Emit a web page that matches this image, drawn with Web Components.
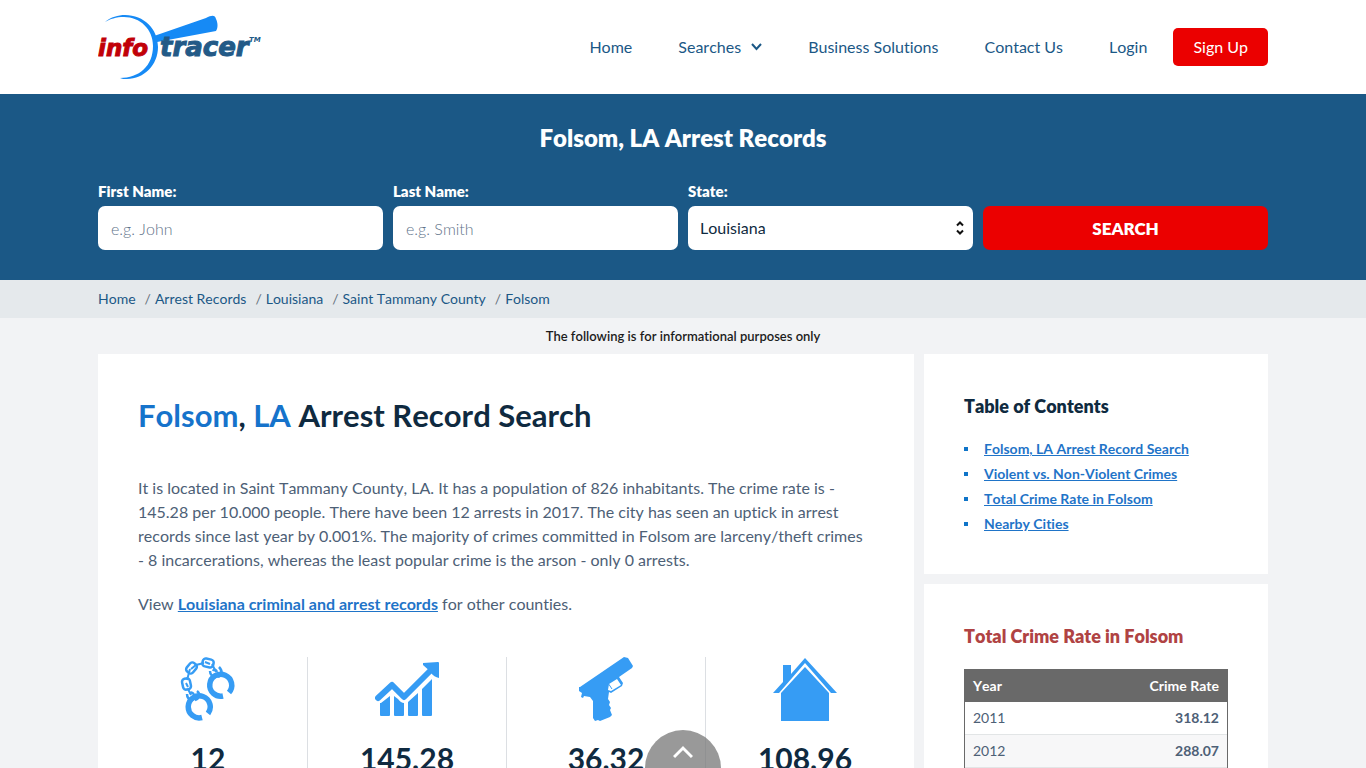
<!DOCTYPE html>
<html lang="en">
<head>
<meta charset="utf-8">
<meta name="viewport" content="width=device-width, initial-scale=1">
<title>Folsom, LA Arrest Records</title>
<style>
    body {
        margin: 0;
        background: #f2f3f5;
        color: #4d6076;
        font: 16px/24px Lato, "Open Sans", sans-serif;
        font-variant-ligatures: none;
        font-kerning: none;
        --navy: #0f2a40;
        --brand: #1b5886;
        --link: #1f74c8;
        --red: #eb0000;
        --icon: #369cf4;
    }
    .columns {
        display: grid;
        grid-template-columns: minmax(0, 1fr) 344px;
        gap: 10px;
        max-width: 1170px;
        margin: 0 auto;
        padding-bottom: 40px;
    }
    .side {
        display: flex;
        flex-direction: column;
        gap: 10px;
    }
    .notice {
        margin: 0;
        padding: 6px 0;
        text-align: center;
        font-size: 13px;
        font-weight: 600;
        color: #1c1c1c;
    }
    h2 {
        margin: 0 0 40px;
        font-size: 31px;
        line-height: 42px;
        color: var(--navy);
    }
    h2 span {
        color: #1673cb;
    }
    p {
        margin: 0 0 20px;
    }
    p a {
        color: var(--link);
        font-weight: bold;
    }
    .nowrap {
        white-space: nowrap;
    }
    .stats {
        display: grid;
        grid-template-columns: repeat(4, 1fr);
        margin: 41px -30px 0;
    }
</style>
</head>
<body>
<site-header></site-header>
<search-banner heading="Folsom, LA Arrest Records"></search-banner>
<bread-crumbs>
    <a href="#">Home</a>
    <a href="#">Arrest Records</a>
    <a href="#">Louisiana</a>
    <a href="#">Saint Tammany County</a>
    <a href="#">Folsom</a>
</bread-crumbs>
<p class="notice">The following is for informational purposes only</p>
<main class="columns">
    <content-card>
        <h2><span>Folsom</span>, <span>LA</span> Arrest Record Search</h2>
        <p>It is located in Saint Tammany County, LA. It has a population of 826 inhabitants. The crime rate is -<wbr>145.28 per 10.000 people. There have been 12 arrests in 2017. The city has seen an uptick in arrest records since last year by 0.001%. The majority of crimes committed in Folsom are larceny/theft crimes <span class="nowrap">- 8 incarcerations</span>, whereas the least popular crime is the arson - only 0 arrests.</p>
        <p>View <a href="#">Louisiana criminal and arrest records</a> for other counties.</p>
        <div class="stats">
            <stat-item icon="cuffs">12</stat-item>
            <stat-item icon="chart">145.28</stat-item>
            <stat-item icon="gun">36.32</stat-item>
            <stat-item icon="house">108.96</stat-item>
        </div>
    </content-card>
    <div class="side">
        <content-card>
            <toc-list></toc-list>
        </content-card>
        <content-card>
            <crime-rate></crime-rate>
        </content-card>
    </div>
</main>
<back-to-top></back-to-top>

<script>
class SiteLogo extends HTMLElement {
    constructor() {
        super()
        this.attachShadow({ mode: 'open' })
        this.shadowRoot.innerHTML = `
            <style>
                :host { display: block; }
                a, svg { display: block; }
                text {
                    font-family: "DejaVu Sans", sans-serif;
                    font-style: italic;
                    font-weight: bold;
                }
                .info {
                    fill: #c10008;
                    stroke: #c10008;
                    font-size: 23px;
                }
                .tracer {
                    fill: #235a87;
                    stroke: #235a87;
                    font-size: 26px;
                }
                .tm {
                    fill: #235a87;
                    font-size: 7px;
                }
            </style>
            <a href="#" aria-label="InfoTracer">
                <svg width="164" height="66" viewBox="0 0 164 66">
                    <path fill="#168af5" d="M7 8C13 3 20 1 27 1C46 1 60 15 60 33C60 51 46 65 29 65C26 65 24 65 22 64C41 64 55 52 55 32C55 15 42 3 26 3C18 3 12 5 7 8Z"/>
                    <path fill="#168af5" d="M56 22L108 4C114 1 117 1 118 5C120 9 120 14 118 17L59 28Z"/>
                    <text class="info" x="0" y="42">info</text>
                    <text class="tracer" x="62" y="42">tracer</text>
                    <text class="tm" x="151" y="28">TM</text>
                </svg>
            </a>
        `
    }
}

class SiteHeader extends HTMLElement {
    constructor() {
        super()
        this.attachShadow({ mode: 'open' })
        this.shadowRoot.innerHTML = `
            <style>
                :host {
                    display: block;
                    background: #fff;
                }
                header {
                    display: flex;
                    align-items: center;
                    justify-content: space-between;
                    max-width: 1170px;
                    height: 94px;
                    margin: 0 auto;
                }
                nav {
                    display: flex;
                    align-items: center;
                    gap: 46px;
                }
                a {
                    display: flex;
                    align-items: center;
                    gap: 10px;
                    color: var(--brand);
                    text-decoration: none;
                }
                .signup {
                    margin-left: -20px;
                    padding: 7px 20px;
                    border-radius: 5px;
                    background: var(--red);
                    color: #fff;
                }
            </style>
            <header>
                <site-logo></site-logo>
                <nav>
                    <a href="#">Home</a>
                    <a href="#">Searches
                        <svg width="11" height="8" viewBox="0 0 11 8" fill="none" stroke="currentColor" stroke-width="2"><path d="M1 1l4.500 5L10 1"/></svg>
                    </a>
                    <a href="#">Business Solutions</a>
                    <a href="#">Contact Us</a>
                    <a href="#">Login</a>
                    <a class="signup" href="#">Sign Up</a>
                </nav>
            </header>
        `
    }
}

const fieldStyles = `
    :host {
        display: flex;
        flex-direction: column;
        gap: 3px;
    }
    label {
        font-size: 15px;
        font-weight: 800;
        color: #fff;
    }
    input, select {
        box-sizing: border-box;
        width: 100%;
        height: 44px;
        border: 0;
        border-radius: 7px;
        background: #fff;
        font: inherit;
        color: var(--navy);
    }
`

class TextField extends HTMLElement {
    constructor() {
        super()
        this.attachShadow({ mode: 'open' })
    }

    connectedCallback() {
        this.shadowRoot.innerHTML = `
            <style>
                ${fieldStyles}
                input { padding: 0 13px; }
                input::placeholder {
                    color: #5f748a;
                    font-weight: 300;
                }
            </style>
            <label for="field">${this.getAttribute('label')}</label>
            <input id="field" type="text" placeholder="${this.getAttribute('hint')}">
        `
    }
}

class StateField extends HTMLElement {
    constructor() {
        super()
        this.attachShadow({ mode: 'open' })
        this.shadowRoot.innerHTML = `
            <style>
                ${fieldStyles}
                .box {
                    display: grid;
                    align-items: center;
                }
                select, svg { grid-area: 1 / 1; }
                select {
                    appearance: none;
                    padding: 0 12px;
                }
                svg {
                    justify-self: end;
                    margin-right: 9px;
                    pointer-events: none;
                }
            </style>
            <label for="state">State:</label>
            <div class="box">
                <select id="state">
                    <option>Louisiana</option>
                </select>
                <svg width="8" height="14" viewBox="0 0 8 14" fill="none" stroke="#111" stroke-width="2"><path d="M1 4.500L4 1.500l3 3M1 9.500l3 3 3-3"/></svg>
            </div>
        `
    }
}

class SearchBanner extends HTMLElement {
    constructor() {
        super()
        this.attachShadow({ mode: 'open' })
    }

    connectedCallback() {
        this.shadowRoot.innerHTML = `
            <style>
                :host {
                    display: block;
                    padding: 28px 0 30px;
                    background: var(--brand);
                    color: #fff;
                }
                h1 {
                    margin: 0 0 25px;
                    text-align: center;
                    font-size: 24px;
                    font-weight: 800;
                    line-height: 32px;
                }
                form {
                    display: grid;
                    grid-template-columns: repeat(4, 1fr);
                    align-items: end;
                    gap: 10px;
                    max-width: 1170px;
                    margin: 0 auto;
                }
                button {
                    height: 44px;
                    border: 0;
                    border-radius: 7px;
                    background: var(--red);
                    color: #fff;
                    font: 800 17px Lato, sans-serif;
                }
            </style>
            <h1>${this.getAttribute('heading')}</h1>
            <form>
                <text-field label="First Name:" hint="e.g. John"></text-field>
                <text-field label="Last Name:" hint="e.g. Smith"></text-field>
                <state-field></state-field>
                <button type="button">SEARCH</button>
            </form>
        `
    }
}

class BreadCrumbs extends HTMLElement {
    constructor() {
        super()
        this.attachShadow({ mode: 'open' })
        this.shadowRoot.innerHTML = `
            <style>
                :host {
                    display: block;
                    background: #e5e9ec;
                    font-size: 14px;
                }
                nav {
                    display: flex;
                    gap: 9px;
                    max-width: 1170px;
                    margin: 0 auto;
                    padding: 7px 0;
                }
                ::slotted(a) {
                    color: var(--brand);
                    text-decoration: none;
                }
                ::slotted(a:not(:first-child))::before {
                    content: "/";
                    margin-right: 4px;
                    color: #66717c;
                }
            </style>
            <nav aria-label="Breadcrumb"><slot></slot></nav>
        `
    }
}

class ContentCard extends HTMLElement {
    constructor() {
        super()
        this.attachShadow({ mode: 'open' })
        this.shadowRoot.innerHTML = `
            <style>
                :host {
                    display: block;
                    padding: 40px 40px 38px;
                    background: #fff;
                }
            </style>
            <slot></slot>
        `
    }
}

const statIcons = {
    cuffs: `
        <g fill="none" stroke="currentColor">
            <path stroke-width="5.500" d="M26 60.500A11 11 0 1 1 32 56.500"/>
            <path stroke-width="5.500" d="M47 39A11 11 0 1 1 53 35.500"/>
            <g stroke-width="2.500">
                <rect x="10" y="7" width="11" height="8" rx="3" transform="rotate(-50 15.500 11)"/>
                <rect x="26.500" y="2" width="11" height="8" rx="3" transform="rotate(12 32 6)"/>
                <rect x="5" y="23" width="11" height="8" rx="3" transform="rotate(78 10.500 27)"/>
            </g>
            <path stroke-width="2" d="M15 12l5-4 8-2M29 5l5 2M14 12l-3 11M10 26l2 4M12 32l3 6M36 7l4 8"/>
            <path stroke-width="2.500" d="M11 37c0 5 3 6 6 6M21 34c4 3 2 8-2 9M14 37c1-2 3-2 4 1M34 14c0 4 3 6 6 6M43 10c4 4 3 8-1 10M37 14c1-2 3-2 4 1"/>
            <path stroke-width="4" d="M15 42l7-2M36 20l7-2"/>
        </g>`,
    chart: `
        <path fill="none" stroke="currentColor" stroke-width="6" stroke-linecap="round" stroke-linejoin="round" d="M3 41L17 28L29 40L56 13"/>
        <path fill="currentColor" d="M48 6l15-1q1 0 1 1v15q-5-1-8-5t-8-8zM5 46h1L15 39V58q0 1-1 1H6q-1 0-1-1zM19 39l4 3q3 4 6 4v12q0 1-1 1h-8q-1 0-1-1zM33 45l10-9v22q0 1-1 1h-8q-1 0-1-1zM47 32l10-10v36q0 1-1 1h-8q-1 0-1-1z"/>`,
    gun: `
        <path fill="currentColor" fill-rule="evenodd" d="M6 30L50 0L54 1L59 9L58 11L45 20L49 26L48 29L37 36L35 35L34 42L36 45L35 48L37 51L36 53L38 58L36 60L26 64L24 63L21 64L19 61L19 44L16 40L10 39L9 41L7 40L8 36L5 34L5 30ZM35 27L34 33L37 34L47 28L43 22Z"/>
        <path fill="none" stroke="currentColor" d="M34 26l4 6"/>`,
    house: `
        <path fill="currentColor" d="M0 36L10 25V8h8v9L32 1l32 35h-6L32 6L6 36zM8 36L32 10L56 36V64H8z"/>`
}

class StatItem extends HTMLElement {
    constructor() {
        super()
        this.attachShadow({ mode: 'open' })
    }

    connectedCallback() {
        this.shadowRoot.innerHTML = `
            <style>
                :host {
                    display: flex;
                    flex-direction: column;
                    align-items: center;
                    gap: 17px;
                    padding-bottom: 40px;
                    border-left: 1px solid #dcdfe3;
                    font-size: 30px;
                    line-height: 40px;
                    font-weight: bold;
                    color: var(--navy);
                }
                :host(:first-child) { border-left-color: transparent; }
                svg { color: var(--icon); }
            </style>
            <svg width="64" height="64" viewBox="0 0 64 64">${statIcons[this.getAttribute('icon')]}</svg>
            <slot></slot>
        `
    }
}

class TocList extends HTMLElement {
    constructor() {
        super()
        this.attachShadow({ mode: 'open' })
        this.shadowRoot.innerHTML = `
            <style>
                :host { display: block; }
                h3 {
                    margin: 0 0 18px;
                    font-size: 18px;
                    font-weight: 800;
                    line-height: 24px;
                    color: var(--navy);
                }
                ul {
                    margin: 0;
                    padding: 0;
                    list-style: none;
                    font-size: 14px;
                    line-height: 25px;
                }
                li {
                    display: flex;
                    align-items: center;
                    gap: 16px;
                }
                li::before {
                    content: "";
                    width: 4px;
                    height: 4px;
                    background: #0f74c8;
                }
                a {
                    color: var(--link);
                    font-weight: bold;
                }
            </style>
            <h3>Table of Contents</h3>
            <ul>
                <li><a href="#">Folsom, LA Arrest Record Search</a></li>
                <li><a href="#">Violent vs. Non-Violent Crimes</a></li>
                <li><a href="#">Total Crime Rate in Folsom</a></li>
                <li><a href="#">Nearby Cities</a></li>
            </ul>
        `
    }
}

class CrimeRate extends HTMLElement {
    constructor() {
        super()
        this.attachShadow({ mode: 'open' })
        this.shadowRoot.innerHTML = `
            <style>
                :host { display: block; }
                h3 {
                    margin: 0 0 21px;
                    font-size: 18px;
                    font-weight: 800;
                    line-height: 24px;
                    color: #b04343;
                }
                table {
                    width: 100%;
                    border: 1px solid #696969;
                    border-spacing: 0;
                    font-size: 14px;
                    line-height: 20px;
                }
                th, td {
                    padding: 6px 8px;
                    text-align: left;
                }
                th {
                    background: #696969;
                    color: #fff;
                }
                td { border-bottom: 1px solid #e2e5e6; }
                tbody tr:nth-child(even) { background: #f7f7f8; }
                th:last-child, td:last-child {
                    text-align: right;
                    font-weight: bold;
                }
            </style>
            <h3>Total Crime Rate in Folsom</h3>
            <table>
                <thead>
                    <tr><th>Year</th><th>Crime Rate</th></tr>
                </thead>
                <tbody>
                    <tr><td>2011</td><td>318.12</td></tr>
                    <tr><td>2012</td><td>288.07</td></tr>
                </tbody>
            </table>
        `
    }
}

class BackToTop extends HTMLElement {
    constructor() {
        super()
        this.attachShadow({ mode: 'open' })
        this.shadowRoot.innerHTML = `
            <style>
                :host {
                    display: block;
                    position: fixed;
                    left: 50%;
                    bottom: 0;
                    transform: translateX(-50%);
                }
                button {
                    display: block;
                    width: 76px;
                    height: 38px;
                    padding: 8px 0 0;
                    border: 0;
                    border-radius: 38px 38px 0 0;
                    background: rgba(119, 119, 119, .75);
                    cursor: pointer;
                }
            </style>
            <button type="button" aria-label="Back to top">
                <svg width="20" height="14" viewBox="0 0 20 14" fill="none" stroke="#fff" stroke-width="3"><path d="M1 12l9-9 9 9"/></svg>
            </button>
        `
        this.shadowRoot.querySelector('button').addEventListener('click', () => window.scrollTo(0, 0))
    }
}

customElements.define('site-logo', SiteLogo)
customElements.define('site-header', SiteHeader)
customElements.define('text-field', TextField)
customElements.define('state-field', StateField)
customElements.define('search-banner', SearchBanner)
customElements.define('bread-crumbs', BreadCrumbs)
customElements.define('content-card', ContentCard)
customElements.define('stat-item', StatItem)
customElements.define('toc-list', TocList)
customElements.define('crime-rate', CrimeRate)
customElements.define('back-to-top', BackToTop)
</script>
</body>
</html>
